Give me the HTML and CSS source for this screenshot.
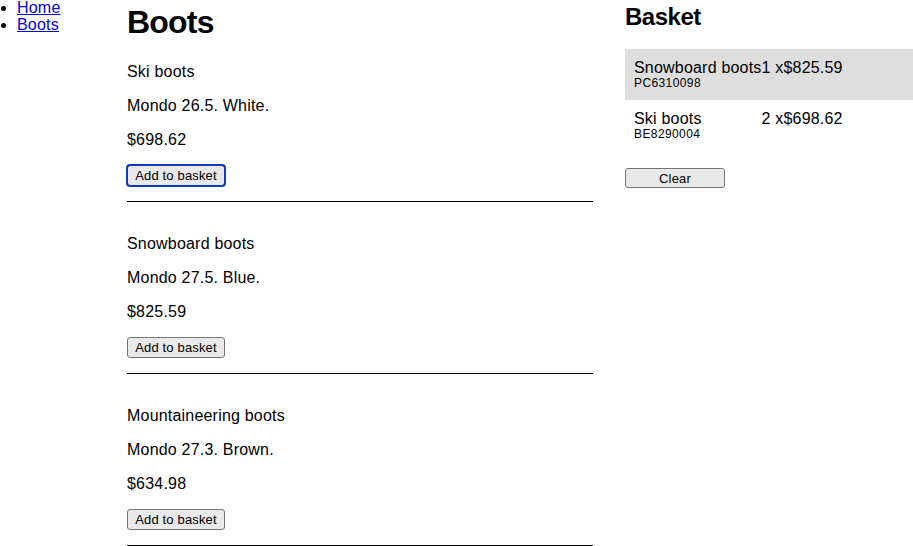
FILE: index.html
```html
<!DOCTYPE html>
<html lang="en">
<head>
<meta charset="utf-8">
<title>Boots</title>
<link rel="stylesheet" href="styles.css">
</head>
<body>
<div class="layout">
  <nav class="nav">
    <ul class="nav-list">
      <li><a href="#">Home</a></li>
      <li><a href="#">Boots</a></li>
    </ul>
  </nav>
  <main class="main">
    <h1 class="title">Boots</h1>
    <div class="product">
      <p>Ski boots</p>
      <p>Mondo 26.5. White.</p>
      <p>$698.62</p>
      <button class="btn btn-add btn-focus">Add to basket</button>
    </div>
    <div class="product">
      <p>Snowboard boots</p>
      <p>Mondo 27.5. Blue.</p>
      <p>$825.59</p>
      <button class="btn btn-add">Add to basket</button>
    </div>
    <div class="product">
      <p>Mountaineering boots</p>
      <p>Mondo 27.3. Brown.</p>
      <p>$634.98</p>
      <button class="btn btn-add">Add to basket</button>
    </div>
  </main>
  <aside class="basket">
    <h2 class="basket-title">Basket</h2>
    <div class="basket-list">
      <div class="basket-row selected">
        <div class="item">
          <div class="item-name">Snowboard boots</div>
          <div class="item-code">PC6310098</div>
        </div>
        <div class="item-qty">1 x$825.59</div>
      </div>
      <div class="basket-row">
        <div class="item">
          <div class="item-name">Ski boots</div>
          <div class="item-code">BE8290004</div>
        </div>
        <div class="item-qty">2 x$698.62</div>
      </div>
    </div>
    <button class="btn btn-clear">Clear</button>
  </aside>
</div>
</body>
</html>
```
FILE: styles.css
```css
html, body {
  margin: 0;
  padding: 0;
  background: #fff;
}
body {
  font-family: "Liberation Sans", Arial, Helvetica, sans-serif;
  font-size: 16px;
  letter-spacing: 0.2px;
  color: #000;
  overflow: hidden;
}
.layout {
  display: grid;
  grid-template-columns: 95px 466px 288px;
  column-gap: 32px;
  align-items: start;
}
.nav-list {
  margin: -1px 0 0 0;
  padding-left: 17px;
  line-height: 17px;
}
.nav-list a {
  color: #0000ee;
}
.title {
  margin: 4px 0 22px 0;
  font-size: 32px;
  line-height: 37px;
  font-weight: bold;
  letter-spacing: -0.8px;
}
.product {
  border-bottom: 1px solid #000;
  padding-bottom: 15px;
  margin-bottom: 16px;
}
.product p {
  margin: 0 0 16px 0;
  line-height: 18px;
}
.product + .product {
  padding-top: 17px;
}
.btn {
  box-sizing: border-box;
  font-family: "Liberation Sans", Arial, sans-serif;
  font-size: 13px;
  line-height: 15px;
  letter-spacing: 0.15px;
  padding: 0 6px;
  border: 1px solid #767676;
  border-radius: 3px;
  background: #e9e9e9;
  color: #000;
  display: block;
  text-align: center;
}
.btn-add {
  width: 98px;
  height: 21px;
}
.btn-focus {
  outline: 2px solid #0b3bb8;
  outline-offset: -1px;
}
.basket-title {
  margin: 5px 0 20px 0;
  font-size: 24px;
  line-height: 24px;
  font-weight: bold;
  letter-spacing: -0.5px;
}
.basket-list {
  display: grid;
  grid-template-columns: max-content 1fr;
}
.basket-row {
  display: contents;
}
.basket-row > div {
  padding: 10px 0;
}
.basket-row.selected > div {
  padding-bottom: 11px;
}
.basket-row .item {
  padding-left: 9px;
}
.basket-row.selected > div {
  background: #dedede;
}
.item-name, .item-qty {
  line-height: 18px;
}
.item-code {
  font-size: 12px;
  line-height: 12px;
  letter-spacing: 0.4px;
}
.btn-clear {
  margin-top: 18px;
  width: 100px;
  height: 20px;
}
```
